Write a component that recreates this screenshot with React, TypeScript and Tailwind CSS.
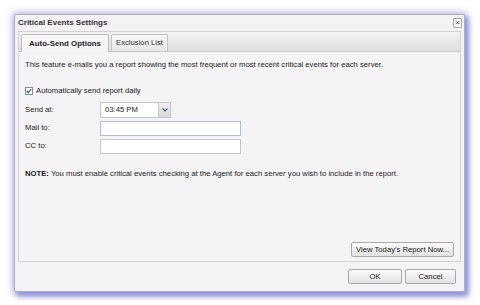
import React from "react";

const font = { fontFamily: '"Liberation Sans", Arial, sans-serif' };

function Btn({ label, w }: { label: string; w: string }) {
  return (
    <button
      className={`${w} h-[15px] rounded-[2px] border border-[#a9a9a9] bg-gradient-to-b from-[#fbfbfb] to-[#e2e2e2] text-[7.7px] text-[#1a1a1a] leading-none`}
    >
      {label}
    </button>
  );
}

export default function App() {
  return (
    <div className="w-[480px] h-[305px] bg-white pt-[14px] pl-[14px]" style={font}>
      <div className="w-[451px] h-[278px] flex flex-col bg-[#f5f2f5] border border-[#aeb0c6] rounded-[2px] shadow-[0_0_6px_2px_rgba(125,130,210,0.5),3px_4px_5px_1px_rgba(100,105,200,0.6)]">
        {/* title */}
        <div className="h-[16px] flex items-center justify-between pl-[3px] pr-[2px]">
          <span className="text-[8px] font-bold text-[#333]">Critical Events Settings</span>
          <span className="w-[9px] h-[10px] border border-[#aaa] rounded-[1px] bg-[#f2f2f2] flex items-center justify-center text-[8px] leading-none text-[#444]">
            ×
          </span>
        </div>

        {/* tab panel */}
        <div className="mx-[3px] flex flex-col border border-[#d2d2d2] h-[231px]">
          <div className="h-[20px] flex items-end pl-[2px] gap-[2px] bg-gradient-to-b from-[#f3f3f3] to-[#dedede] border-b border-[#c9c9c9]">
            <div className="h-[18px] -mb-px w-[88px] flex items-center justify-center border border-b-0 border-[#bdbdbd] bg-[#f7f5f7] rounded-t-[2px] text-[7.9px] font-bold text-[#222]">
              Auto-Send Options
            </div>
            <div className="h-[17px] w-[57px] flex items-center justify-center border border-b-0 border-[#c4c4c4] bg-gradient-to-b from-[#f8f8f8] to-[#e6e6e6] rounded-t-[2px] text-[7.7px] text-[#333]">
              Exclusion List
            </div>
          </div>

          <div className="flex-1 flex flex-col px-[6px] pt-[8px] pb-[4px] text-[7.7px] text-[#1a1a1a] bg-[#f6f3f6]">
            <p className="leading-[10px]">
              This feature e-mails you a report showing the most frequent or most recent critical events for each server.
            </p>

            <label className="flex items-center gap-[3px] mt-[15px]">
              <span className="w-[8px] h-[8px] border border-[#7f8fa8] bg-white flex items-center justify-center">
                <svg width="6" height="6" viewBox="0 0 6 6">
                  <path d="M0.8 3 L2.3 4.6 L5.2 1" stroke="#2b4a8a" strokeWidth="1.1" fill="none" />
                </svg>
              </span>
              <span>Automatically send report daily</span>
            </label>

            <div className="grid grid-cols-[75px_1fr] gap-y-[3px] mt-[5px] items-center">
              <span>Send at:</span>
              <div className="flex h-[16px] w-[71px] border border-[#c6c6c6] bg-white">
                <span className="flex-1 flex items-center pl-[4px]">03:45 PM</span>
                <span className="w-[12px] flex items-center justify-center bg-gradient-to-b from-[#f0f0f0] to-[#d8d8d8] border-l border-[#c6c6c6]">
                  <svg width="6" height="4" viewBox="0 0 6 4">
                    <path d="M0.5 0.5 L3 3 L5.5 0.5" stroke="#3a5a90" strokeWidth="1.2" fill="none" />
                  </svg>
                </span>
              </div>
              <span>Mail to:</span>
              <div className="h-[15px] w-[141px] border border-[#a9c1d8] bg-white" />
              <span>CC to:</span>
              <div className="h-[15px] w-[141px] border border-[#c6c6c6] bg-white" />
            </div>

            <p className="mt-[14px]">
              <b>NOTE:</b> You must enable critical events checking at the Agent for each server you wish to include in the report.
            </p>

            <div className="mt-auto flex justify-end">
              <Btn label="View Today's Report Now..." w="w-[103px]" />
            </div>
          </div>
        </div>

        {/* footer */}
        <div className="flex-1 flex items-center justify-end gap-[3px] pr-[8px]">
          <Btn label="OK" w="w-[54px]" />
          <Btn label="Cancel" w="w-[51px]" />
        </div>
      </div>
    </div>
  );
}
